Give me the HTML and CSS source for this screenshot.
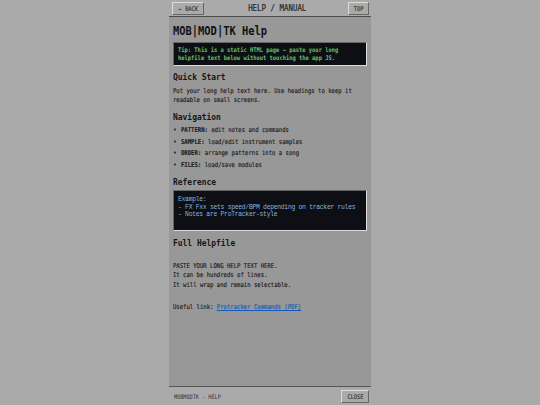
FILE: index.html
```html
<!DOCTYPE html>
<html lang="en">
<head>
    <meta charset="UTF-8">
    <meta name="viewport" content="width=device-width, initial-scale=1.0">
    <title>MOB|MOD|TK Help</title>
    <link rel="stylesheet" href="styles.css">
</head>
<body>
    <div class="app">
        <header class="topbar">
            <button class="btn back"><span>← BACK</span></button>
            <div class="title"><span>HELP / MANUAL</span></div>
            <button class="btn top"><span>TOP</span></button>
        </header>
        <main class="content">
            <h1>MOB|MOD|TK Help</h1>
            <div class="tip"><p>Tip: This is a static HTML page – paste your long<br>helpfile text below without touching the app JS.</p></div>

            <h2>Quick Start</h2>
            <p class="intro">Put your long help text here. Use headings to keep it<br>readable on small screens.</p>

            <h2>Navigation</h2>
            <ul>
                <li><b>PATTERN:</b> edit notes and commands</li>
                <li><b>SAMPLE:</b> load/edit instrument samples</li>
                <li><b>ORDER:</b> arrange patterns into a song</li>
                <li><b>FILES:</b> load/save modules</li>
            </ul>

            <h2>Reference</h2>
            <pre class="code">Example:
- FX Fxx sets speed/BPM depending on tracker rules
- Notes are ProTracker-style
</pre>

            <h2>Full Helpfile</h2>
            <p class="long">PASTE YOUR LONG HELP TEXT HERE.<br>It can be hundreds of lines.<br>It will wrap and remain selectable.</p>
            <p class="link">Useful link: <a href="#">Protracker Commands (PDF)</a></p>
        </main>
        <footer class="bottombar">
            <span class="status">MOBMODTK - HELP</span>
            <button class="btn close"><span>CLOSE</span></button>
        </footer>
    </div>
</body>
</html>
```

FILE: styles.css
```css
* {
    box-sizing: border-box;
}
body {
    margin: 0;
    height: 100vh;
    background: #aaa;
    color: #1c1c1c;
    font-family: 'DejaVu Sans Mono', monospace;
    font-size: 6.6px;
    overflow: hidden;
}
.app {
    width: 202px;
    height: 405px;
    margin: 0 auto;
    display: flex;
    flex-direction: column;
}
.topbar {
    height: 17px;
    padding: 1px 2px 1px 3px;
    display: flex;
    justify-content: space-between;
    align-items: center;
    border-bottom: 1px solid #4a4a4a;
}
.bottombar {
    height: 19px;
    padding: 0 2px 0 5px;
    display: flex;
    justify-content: space-between;
    align-items: center;
    border-top: 1px solid #555;
}

/* condensed terminal lettering */
h1, h2, p, li, .status {
    margin: 0;
    width: 117.6%;
    transform: scaleX(0.85);
    transform-origin: left;
    white-space: nowrap;
}
p, li, .btn, .title {
    -webkit-text-stroke: 0.15px;
}
.btn span, .title span {
    display: block;
    white-space: nowrap;
    transform: scaleX(0.85);
}
.title {
    font-size: 8.75px;
    margin-right: -3px;
}
.status {
    width: auto;
    font-size: 6.1px;
    color: #333;
}
.btn {
    display: flex;
    justify-content: center;
    align-items: center;
    padding: 1px 0 0;
    height: 13px;
    font-family: inherit;
    font-size: 6.3px;
    color: #333;
    background: #aaa;
    border: 1px solid;
    border-color: #ddd #666 #666 #ddd;
}
.back {
    width: 32px;
}
.top {
    width: 21px;
}
.close {
    width: 28px;
}

.content {
    flex: 1;
    padding: 5px 4px 0;
    background: #989898;
}
h1 {
    font-size: 12.25px;
    line-height: 18px;
    color: #111;
}
h2 {
    font-size: 9.35px;
    line-height: 12px;
    color: #151515;
}
.tip {
    height: 24px;
    margin: 2px 0 5px;
    padding: 4px 4px 0;
    background: #0e0e15;
    border: 1px solid;
    border-color: #666 #ddd #ddd #666;
}
.tip p {
    font-size: 6.4px;
    font-weight: bold;
    line-height: 7.7px;
    color: #63c363;
    -webkit-text-stroke: 0;
}
.intro {
    line-height: 9.4px;
    margin: 4px 0 5px;
}
ul {
    list-style: none;
    margin: 2px 0 4px;
    padding: 0 0 0 7.5px;
}
li {
    line-height: 11.75px;
}
li::before {
    content: "•";
    display: inline-block;
    width: 9px;
    margin-left: -9px;
}
.code {
    height: 41px;
    margin: 2px 0 6px;
    padding: 5px 4px 4px;
    font-family: 'Liberation Mono', monospace;
    font-size: 6.4px;
    letter-spacing: -0.29px;
    line-height: 7.7px;
    color: #83b5df;
    background: #0e0e15;
    border: 1px solid;
    border-color: #666 #ddd #ddd #666;
}
.long {
    line-height: 9.4px;
    margin-top: 13px;
}
.link {
    line-height: 9.4px;
    margin-top: 13px;
}
.link a {
    color: #1459b8;
}
```
